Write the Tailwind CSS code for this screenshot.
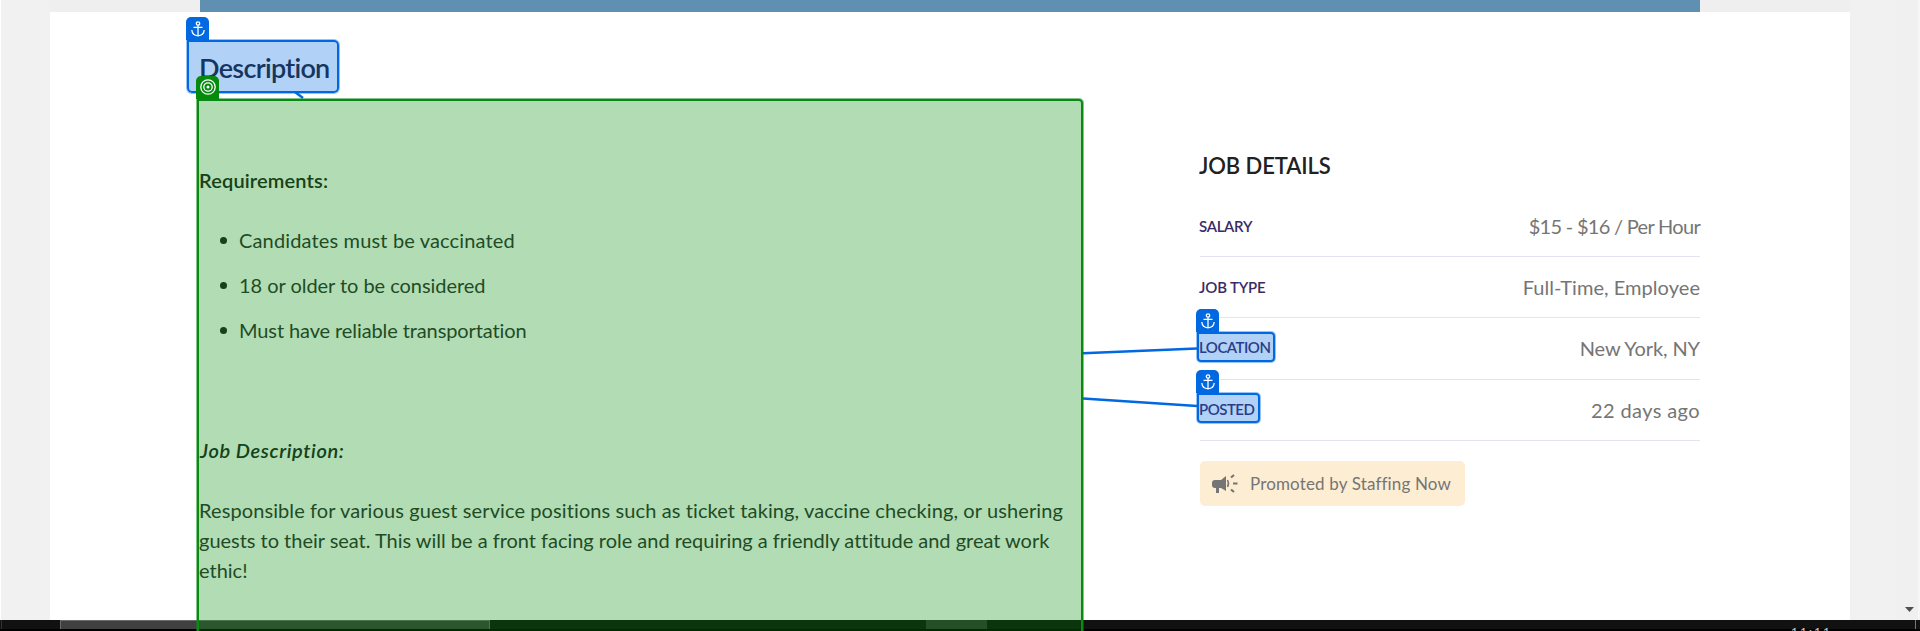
<!DOCTYPE html>
<html lang="en">
<head>
<meta charset="utf-8">
<title>Job posting</title>
<script src="https://cdn.jsdelivr.net/npm/@tailwindcss/browser@4"></script>
</head>
<body class="relative flex h-[631px] w-[1920px] flex-col overflow-hidden bg-[#f1f1f1] font-['Lato','Liberation_Sans',sans-serif] text-[20px] text-[#212124] [font-variant-ligatures:none]">
<div class="flex h-[620px] border-l border-white">
  <main class="ml-[49px] flex w-[1800px] flex-col bg-white">
    <div class="h-3 shrink-0 bg-[#efefef] px-[150px]"><div class="h-3 bg-[#5f90b2]"></div></div>
    <div class="flex grow justify-between px-[150px]">
      <section class="w-[880px] whitespace-nowrap leading-[30px]">
        <h1 class="mt-[38px] -ml-px text-[27px] font-semibold leading-[36px] tracking-[-0.7px]"><span>Description</span></h1>
        <p class="mt-[79px] -ml-px font-semibold tracking-[0.15px]"><span>Requirements:</span></p>
        <ul class="mt-[30px] flex flex-col gap-[15px] pl-[20px] font-normal text-[#303033]">
          <li class="flex items-center gap-[13px]"><i class="size-[7px] rounded-full bg-[#212124]"></i><span class="-ml-px tracking-[0.15px]">Candidates must be vaccinated</span></li>
          <li class="flex items-center gap-[13px]"><i class="size-[7px] rounded-full bg-[#212124]"></i><span class="-ml-px tracking-[-0.04px]">18 or older to be considered</span></li>
          <li class="flex items-center gap-[13px]"><i class="size-[7px] rounded-full bg-[#212124]"></i><span class="-ml-px tracking-[-0.1px]">Must have reliable transportation</span></li>
        </ul>
        <p class="mt-[90px] font-semibold italic tracking-[0.6px]"><span>Job Description:</span></p>
        <p class="mt-[30px] -ml-px font-normal text-[#303033]"><span class="tracking-[0.1px]">Responsible for various guest service positions such as ticket taking, vaccine checking, or ushering</span><br><span class="tracking-[-0.02px]">guests to their seat. This will be a front facing role and requiring a friendly attitude and great work</span><br><span>ethic!</span></p>
      </section>
      <aside class="w-[500px] whitespace-nowrap">
        <h2 class="mt-[139px] -ml-px text-[22px] font-semibold leading-[30px] tracking-[-0.1px]"><span>JOB DETAILS</span></h2>
        <dl class="mt-[15px]">
          <div class="flex h-[61px] items-center justify-between border-b border-[#e4e3f3]"><dt class="-ml-px text-[15px] font-semibold tracking-[-0.3px] text-[#3b2a63]">SALARY</dt><dd class="font-normal tracking-[-0.7px] text-[#757575]">$15 - $16 / Per Hour</dd></div>
          <div class="flex h-[61px] items-center justify-between border-b border-[#e4e3f3]"><dt class="-ml-px text-[15px] font-semibold tracking-[-0.15px] text-[#3b2a63]">JOB TYPE</dt><dd class="font-normal tracking-[0.05px] text-[#757575]">Full-Time, Employee</dd></div>
          <div class="flex h-[62px] items-center justify-between border-b border-[#e4e3f3] pb-0.5"><dt class="-ml-px text-[15px] font-semibold tracking-[-0.5px] text-[#3b2a63]">LOCATION</dt><dd class="font-normal tracking-[-0.1px] text-[#757575]">New York, NY</dd></div>
          <div class="flex h-[61px] items-center justify-between border-b border-[#e4e3f3]"><dt class="-ml-px -mt-0.5 text-[15px] font-semibold tracking-[-0.5px] text-[#3b2a63]">POSTED</dt><dd class="font-normal tracking-[0.4px] text-[#757575]">22 days ago</dd></div>
        </dl>
        <div class="mt-5 flex h-[45px] w-[265px] items-center rounded-[5px] bg-[#fdedd3] pl-3 text-[17px] font-normal tracking-[0.15px] text-[#757575]">
          <svg class="mr-3 h-[20px] w-[26px] shrink-0" viewBox="0 0 26 20" fill="#757575"><path d="M3 6h6l5-4v15l-5-3H7v5H4v-5H3Q0 14 0 11V9Q0 6 3 6Z"/><path d="M15.500 6q2 3.500 0 7" fill="none" stroke="#757575" stroke-width="1.500"/><path d="m19 3.500 3-2.500M21 9.500h4.500M19 15.500l3 2.500" fill="none" stroke="#757575" stroke-width="2.200"/></svg>
          <span>Promoted by Staffing Now</span>
        </div>
      </aside>
    </div>
  </main>
  <div class="ml-auto flex w-[22px] items-end bg-[#f0f0f0] pb-2 pl-[9px]"><svg class="h-[5px] w-[9px]" viewBox="0 0 9 5"><path d="M0 0h9L4.500 5Z" fill="#505050"/></svg></div>
  <div class="w-0.5 bg-[#f6f6f6]"></div>
</div>
<footer class="flex h-[11px] overflow-hidden border-b-2 border-black bg-[#111]">
  <div class="ml-px h-full w-px bg-[#333]"></div>
  <div class="ml-[58px] h-full w-[430px] border-x border-t border-[#6a6a6a] bg-[#404040]"></div>
  <div class="ml-[436px] h-full w-[61px] bg-[#363636]"></div>
  <div class="ml-auto mr-1 h-full w-px bg-[#777]"></div>
</footer>
<div class="absolute left-[1791px] top-[624px] text-[12px] leading-[16px] tracking-[2px] text-[#ccc]">11:11</div>

<!-- Connectors between the anchors and the target -->
<svg class="absolute left-0 top-0 h-[631px] w-[1920px]" viewBox="0 0 1920 631" fill="none" stroke="#0068e0" stroke-width="2.500"><path d="M295 92l8 6M1083 353.300l114-4.800M1083 398.500l114 7.500"/></svg>

<!-- Anchor boxes -->
<svg class="hidden"><symbol id="anchor" viewBox="0 0 14 16"><g fill="none" stroke="#fff" stroke-width="1.300"><circle cx="7" cy="2.500" r="1.700"/><path d="M7 4.200V15M2.500 6.300h9" /><path d="M.8 9q.5 5.500 6.200 5.800Q12.700 14.500 13.200 9"/></g></symbol></svg>
<div class="absolute left-[187px] top-[40px] h-[53px] w-[152px] rounded-[5px] rounded-tl-none border-2 border-[#0068e0] bg-[#0066e0]/30 ring-1 ring-[#0068e0]/40"></div>
<div class="absolute left-[186px] top-[17px] flex h-[23px] w-[23px] items-center justify-center rounded-t-[5px] bg-[#0068e0]"><svg class="h-4 w-3.5"><use href="#anchor"/></svg></div>
<div class="absolute left-[1197px] top-[332px] h-[30px] w-[78px] rounded-[4px] rounded-tl-none border-2 border-[#0068e0] bg-[#0066e0]/30 ring-1 ring-[#0068e0]/40"></div>
<div class="absolute left-[1196px] top-[309px] flex h-[23px] w-[23px] items-center justify-center rounded-t-[5px] bg-[#0068e0]"><svg class="h-4 w-3.5"><use href="#anchor"/></svg></div>
<div class="absolute left-[1197px] top-[393px] h-[30px] w-[63px] rounded-[4px] rounded-tl-none border-2 border-[#0068e0] bg-[#0066e0]/30 ring-1 ring-[#0068e0]/40"></div>
<div class="absolute left-[1196px] top-[370px] flex h-[23px] w-[23px] items-center justify-center rounded-t-[5px] bg-[#0068e0]"><svg class="h-4 w-3.5"><use href="#anchor"/></svg></div>

<!-- Target box -->
<div class="absolute left-[197px] top-[99px] h-[540px] w-[886px] rounded-tr-[4px] border-2 border-[#0a8a12] bg-[#008a08]/30 ring-1 ring-[#0a8a12]/50"></div>
<div class="absolute left-[196px] top-[76px] flex h-[23px] w-[23px] items-center justify-center rounded-t-[5px] bg-[#048a0c]"><svg class="-mt-px size-4" viewBox="0 0 16 16" fill="none" stroke="#fff" stroke-width="1.300"><circle cx="8" cy="8" r="7.200"/><circle cx="8" cy="8" r="4.200"/><circle cx="8" cy="8" r="1.500" fill="#fff" stroke="none"/></svg></div>
</body>
</html>
